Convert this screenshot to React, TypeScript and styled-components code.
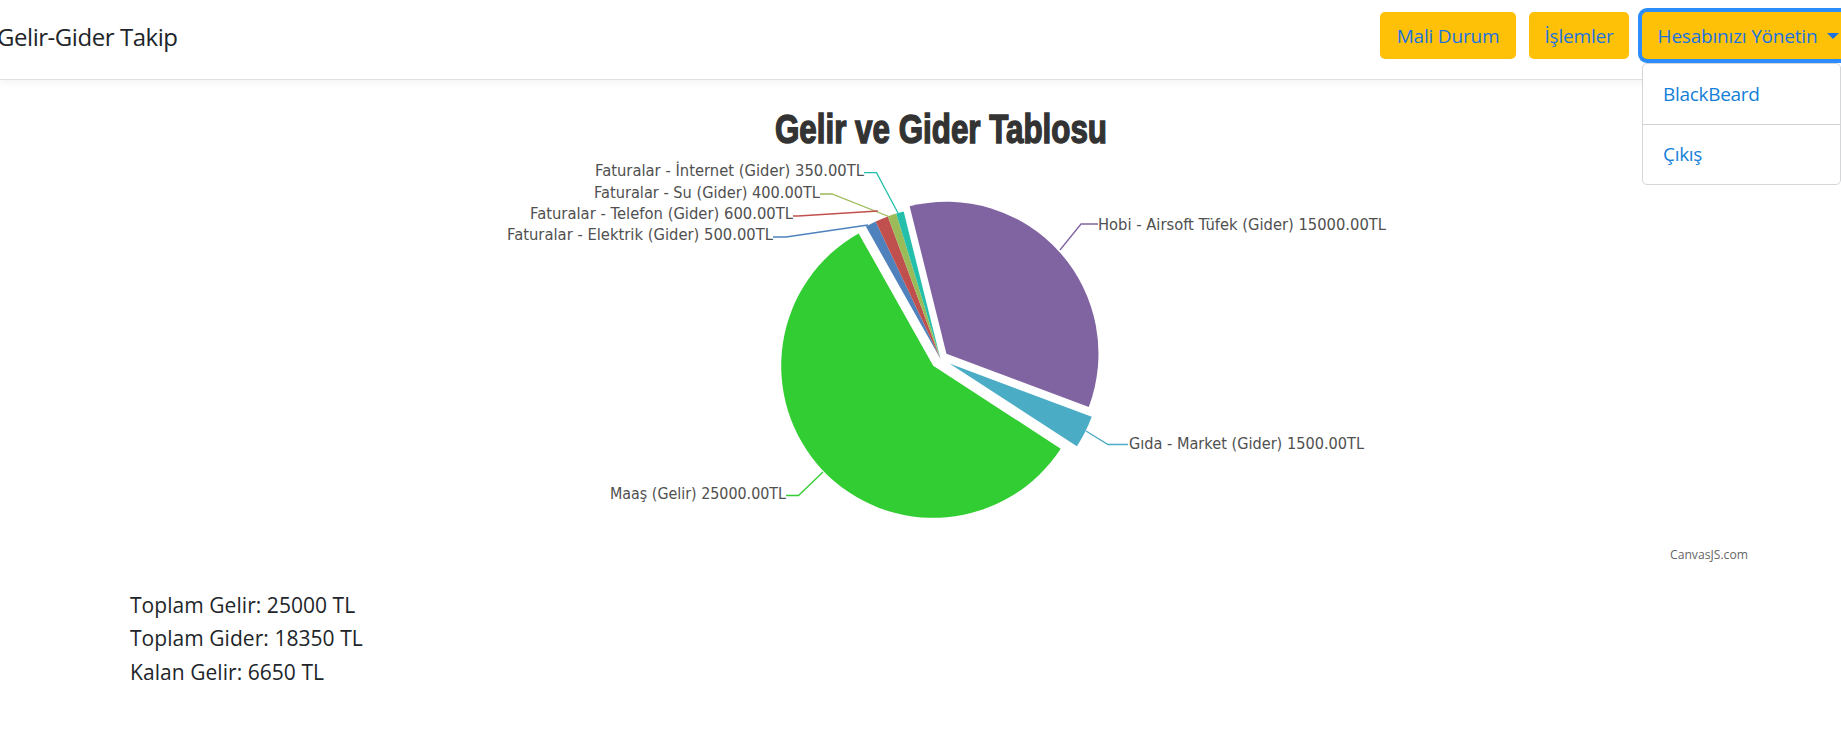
import React from "react";
import styled, { createGlobalStyle } from "styled-components";

const GlobalStyle = createGlobalStyle`
  html, body {
    margin: 0;
    padding: 0;
    width: 1841px;
    height: 756px;
    overflow: hidden;
    background: #fff;
  }
  body {
    font-family: "Open Sans", "Noto Sans", "Liberation Sans", sans-serif;
    color: #212529;
  }
`;

const Navbar = styled.header`
  height: 79px;
  box-sizing: content-box;
  display: flex;
  align-items: flex-start;
  justify-content: space-between;
  border-bottom: 1px solid #dfdfdf;
  box-shadow: 0 2px 8px rgba(0, 0, 0, 0.06);
  position: relative;
`;

const Brand = styled.div`
  margin: 21px 0 0 -3px;
  font-size: 24px;
  line-height: 32px;
  letter-spacing: -0.45px;
  color: #212529;
`;

const Actions = styled.nav`
  display: flex;
  gap: 13px;
  margin-top: 12px;
`;

const ActionButton = styled.button<{ $width: number; $focused?: boolean }>`
  width: ${(p) => p.$width}px;
  height: 47px;
  padding: 0;
  border: 0;
  border-radius: 5px;
  background: #ffc107;
  color: #1a73e0;
  font-family: inherit;
  font-size: 19px;
  letter-spacing: -0.2px;
  display: flex;
  align-items: center;
  justify-content: center;
  box-shadow: ${(p) => (p.$focused ? "0 0 0 4px #2d8cfb" : "none")};
`;

const AccountGroup = styled.div`
  position: relative;
  margin-right: -14px;
`;

const AccountLabel = styled.span`
  margin-right: 10px;
`;

const Caret = styled.i`
  width: 0;
  height: 0;
  border-left: 6px solid transparent;
  border-right: 6px solid transparent;
  border-top: 6px solid #1a73e0;
`;

const DropdownMenu = styled.div`
  position: absolute;
  top: 51px;
  left: 0;
  width: 199px;
  height: 122px;
  box-sizing: border-box;
  background: #fff;
  border: 1px solid #d4d6d8;
  border-radius: 5px;
  display: flex;
  flex-direction: column;
`;

const DropdownItem = styled.a`
  height: 59.5px;
  display: flex;
  align-items: center;
  padding-left: 20px;
  font-size: 19px;
  letter-spacing: -0.3px;
  color: #1280d8;
`;

const DropdownDivider = styled.hr`
  margin: 0;
  border: 0;
  border-top: 1px solid #cfd1d3;
`;

const ChartSvg = styled.svg`
  display: block;
  width: 1841px;
  height: 500px;
`;

const ChartTitle = styled.text`
  font-family: "Liberation Sans", sans-serif;
  font-weight: 700;
  font-size: 41px;
  fill: #333;
  stroke: #333;
  stroke-width: 1.5px;
`;

const SliceLabel = styled.text`
  font-family: "DejaVu Sans", sans-serif;
  font-size: 15px;
  fill: #505050;
`;

const Credit = styled.text`
  font-family: "Open Sans", sans-serif;
  font-size: 12px;
  fill: #666;
`;

const Summary = styled.section`
  margin-top: 9px;
  padding-left: 130px;
  font-size: 21px;
  line-height: 33.4px;
  letter-spacing: 0.05px;
  color: #212529;
`;

const SummaryLine = styled.div``;

const CX = 940.5;
const CY = 359;
const R = 152;
const TOTAL = 43350;
const START = 33;

type Slice = { value: number; color: string; explode: number };

const slices: Slice[] = [
  { value: 25000, color: "#32cd32", explode: 10 },
  { value: 500, color: "#4f81bc", explode: 0 },
  { value: 600, color: "#c0504e", explode: 0 },
  { value: 400, color: "#9bbb58", explode: 0 },
  { value: 350, color: "#23bfaa", explode: 0 },
  { value: 15000, color: "#8064a1", explode: 8 },
  { value: 1500, color: "#4aacc5", explode: 10 },
];

function wedgePath(from: number, to: number, explode: number) {
  const rad = (d: number) => (d * Math.PI) / 180;
  const mid = rad((from + to) / 2);
  const ox = CX + explode * Math.cos(mid);
  const oy = CY + explode * Math.sin(mid);
  const x1 = ox + R * Math.cos(rad(from));
  const y1 = oy + R * Math.sin(rad(from));
  const x2 = ox + R * Math.cos(rad(to));
  const y2 = oy + R * Math.sin(rad(to));
  const large = to - from > 180 ? 1 : 0;
  return `M${ox} ${oy}L${x1} ${y1}A${R} ${R} 0 ${large} 1 ${x2} ${y2}Z`;
}

function buildWedges() {
  let angle = START;
  return slices.map((s) => {
    const sweep = (s.value / TOTAL) * 360;
    const d = wedgePath(angle, angle + sweep, s.explode);
    angle += sweep;
    return { d, color: s.color };
  });
}

const labels = [
  { text: "Faturalar - İnternet (Gider) 350.00TL", x: 595, y: 176, w: 269 },
  { text: "Faturalar - Su (Gider) 400.00TL", x: 594, y: 198, w: 226 },
  { text: "Faturalar - Telefon (Gider) 600.00TL", x: 530, y: 219, w: 263 },
  { text: "Faturalar - Elektrik (Gider) 500.00TL", x: 507, y: 240, w: 266 },
  { text: "Hobi - Airsoft Tüfek (Gider) 15000.00TL", x: 1098, y: 230, w: 288 },
  { text: "Gıda - Market (Gider) 1500.00TL", x: 1129, y: 449, w: 235 },
  { text: "Maaş (Gelir) 25000.00TL", x: 610, y: 499, w: 176 },
];

const leaders = [
  { points: "864,172.7 876.5,172.7 898,213", color: "#23bfaa" },
  { points: "820,194 832,194 890,217", color: "#9bbb58" },
  { points: "793,216 798,216 878,211", color: "#c0504e" },
  { points: "773,237 786,237 868,225", color: "#4f81bc" },
  { points: "1098,224 1081,224 1060,250", color: "#8064a1" },
  { points: "1128,444.5 1108,444.5 1086,431", color: "#4aacc5" },
  { points: "786,495.5 798.5,495.5 823,472", color: "#32cd32" },
];

function PieChart() {
  return (
    <ChartSvg viewBox="0 80 1841 500">
      <ChartTitle x={775} y={143} textLength={332} lengthAdjust="spacingAndGlyphs">
        Gelir ve Gider Tablosu
      </ChartTitle>
      {leaders.map((l) => (
        <polyline key={l.points} points={l.points} fill="none" stroke={l.color} strokeWidth={1.3} />
      ))}
      {buildWedges().map((w) => (
        <path key={w.color} d={w.d} fill={w.color} />
      ))}
      {labels.map((l) => (
        <SliceLabel key={l.text} x={l.x} y={l.y} textLength={l.w} lengthAdjust="spacingAndGlyphs">
          {l.text}
        </SliceLabel>
      ))}
      <Credit x={1670} y={559} textLength={78} lengthAdjust="spacingAndGlyphs">
        CanvasJS.com
      </Credit>
    </ChartSvg>
  );
}

export default function App() {
  return (
    <>
      <GlobalStyle />
      <Navbar>
        <Brand>Gelir-Gider Takip</Brand>
        <Actions>
          <ActionButton $width={136}>Mali Durum</ActionButton>
          <ActionButton $width={100}>İşlemler</ActionButton>
          <AccountGroup>
            <ActionButton $width={213} $focused>
              <AccountLabel>Hesabınızı Yönetin</AccountLabel>
              <Caret />
            </ActionButton>
            <DropdownMenu>
              <DropdownItem>BlackBeard</DropdownItem>
              <DropdownDivider />
              <DropdownItem>Çıkış</DropdownItem>
            </DropdownMenu>
          </AccountGroup>
        </Actions>
      </Navbar>
      <PieChart />
      <Summary>
        <SummaryLine>Toplam Gelir: 25000 TL</SummaryLine>
        <SummaryLine>Toplam Gider: 18350 TL</SummaryLine>
        <SummaryLine>Kalan Gelir: 6650 TL</SummaryLine>
      </Summary>
    </>
  );
}
